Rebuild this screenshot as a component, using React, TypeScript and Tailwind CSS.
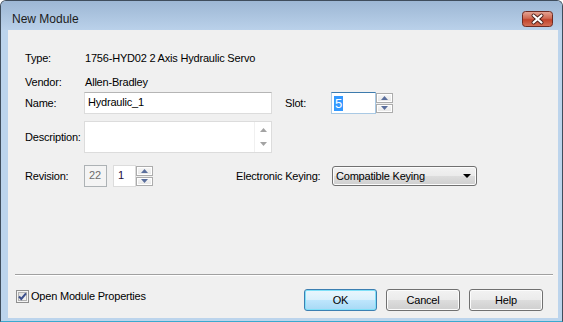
import React from "react";

function SpinArrow({ up }: { up?: boolean }) {
  return (
    <svg width="7" height="4" viewBox="0 0 7 4">
      <path d={up ? "M0 4 L3.5 0 L7 4 Z" : "M0 0 L7 0 L3.5 4 Z"} fill="#5a6e9c" />
    </svg>
  );
}

function Spinner() {
  return (
    <div className="flex flex-col w-[17px] h-full gap-px">
      <div className="flex-1 flex items-center justify-center border border-[#acacac] bg-linear-to-b from-[#f7f7f7] to-[#e6e6e6] shadow-[inset_0_0_0_1px_#ffffff]">
        <SpinArrow up />
      </div>
      <div className="flex-1 flex items-center justify-center border border-[#acacac] bg-linear-to-b from-[#f7f7f7] to-[#e6e6e6] shadow-[inset_0_0_0_1px_#ffffff]">
        <SpinArrow />
      </div>
    </div>
  );
}

function WinButton({ label, primary, className }: { label: string; primary?: boolean; className?: string }) {
  const look = primary
    ? "border-[#3c7fb1] bg-[linear-gradient(#eaf6fd_0%,#d9f0fc_49%,#bee6fd_50%,#a7d9f5_100%)] shadow-[inset_0_0_0_1px_#7fe0f8]"
    : "border-[#707070] bg-[linear-gradient(#f2f2f2_0%,#ebebeb_49%,#dddddd_50%,#cfcfcf_100%)] shadow-[inset_0_0_0_1px_#fcfcfc]";
  return (
    <button className={`h-[22px] rounded-[3px] border flex items-center justify-center text-[11px] text-black ${look} ${className ?? ""}`}>
      {label}
    </button>
  );
}

export default function App() {
  return (
    <div className="w-[563px] h-[322px] flex flex-col overflow-hidden rounded-t-[6px] border border-[#3f4d5c] border-b-[#3aa9cf] bg-[#bcd4ec] font-['Liberation_Sans',Arial,sans-serif] text-[11px] tracking-[-0.2px] text-black">
      {/* title bar */}
      <div className="h-[29px] flex items-start pt-[10px] pl-[11px] pr-[9px] bg-linear-to-b from-[#9db7d4] to-[#bad1ea]">
        <span className="text-[12px] leading-[16px] tracking-normal text-[#1b1b1b]">New Module</span>
        <svg className="ml-auto" width="31" height="16" viewBox="0 0 31 16">
          <defs>
            <linearGradient id="cls" x1="0" y1="0" x2="0" y2="1">
              <stop offset="0" stopColor="#e6a898" />
              <stop offset="0.45" stopColor="#d06a53" />
              <stop offset="0.55" stopColor="#c2432b" />
              <stop offset="1" stopColor="#d5735a" />
            </linearGradient>
          </defs>
          <rect x="0.5" y="0.5" width="30" height="15" rx="3" fill="url(#cls)" stroke="#6e2b22" />
          <path d="M11.5 4.5 L19.5 11.5 M19.5 4.5 L11.5 11.5" stroke="#4a1f19" strokeWidth="4" strokeLinecap="round" />
          <path d="M11.5 4.5 L19.5 11.5 M19.5 4.5 L11.5 11.5" stroke="#ffffff" strokeWidth="2.2" strokeLinecap="round" />
        </svg>
      </div>

      {/* client area */}
      <div className="flex-1 ml-[7px] mr-[4px] mb-[3px] bg-[#f0f0f0] flex flex-col">
        <div className="flex flex-col pl-[17px] pt-[21px]">
          <div className="flex h-[14px] items-center leading-[14px]">
            <span className="w-[60px]">Type:</span>
            <span>1756-HYD02 2 Axis Hydraulic Servo</span>
          </div>
          <div className="flex h-[14px] items-center leading-[14px] mt-[10px]">
            <span className="w-[60px]">Vendor:</span>
            <span>Allen-Bradley</span>
          </div>

          <div className="flex h-[22px] items-center mt-[3px]">
            <span className="w-[59px]">Name:</span>
            <div className="w-[188px] h-[22px] bg-white border border-[#dcdcdc] border-t-[#b5b5b5] flex items-start pt-[2px] pl-[3px] leading-[15px]">
              Hydraulic_1
            </div>
            <span className="ml-[13px] w-[46px]">Slot:</span>
            <div className="w-[62px] h-[22px] flex">
              <div className="flex-1 bg-white border border-[#a9c9e4] border-t-[#3d7bad] flex items-center pl-[2px]">
                <span className="bg-[#3399ff] text-white text-[13px] leading-[15px] px-px">5</span>
              </div>
              <div className="py-px">
                <Spinner />
              </div>
            </div>
          </div>

          <div className="flex h-[32px] items-center mt-[7px]">
            <span className="w-[59px]">Description:</span>
            <div className="w-[188px] h-[32px] bg-white border border-[#dcdcdc] flex justify-end">
              <div className="w-[17px] h-full border-l border-[#f0f0f0] flex flex-col items-center justify-between py-[6px]">
                <svg width="7" height="4" viewBox="0 0 7 4">
                  <path d="M0 4 L3.5 0 L7 4 Z" fill="#a3a3a3" />
                </svg>
                <svg width="7" height="4" viewBox="0 0 7 4">
                  <path d="M0 0 L7 0 L3.5 4 Z" fill="#a3a3a3" />
                </svg>
              </div>
            </div>
          </div>

          <div className="flex h-[22px] items-center mt-[12px]">
            <span className="w-[59px]">Revision:</span>
            <div className="w-[23px] h-[22px] border border-[#adb2b5] bg-[#f4f4f4] text-[#6d6d6d] pl-[4px] pt-[2px] leading-[15px]">
              22
            </div>
            <div className="ml-[6px] w-[40px] h-[22px] flex">
              <div className="flex-1 bg-white border border-[#dcdcdc] pl-[4px] pt-[2px] leading-[15px] text-[#1d0c3a]">1</div>
              <div className="py-px">
                <Spinner />
              </div>
            </div>
            <span className="ml-[83px] w-[96px]">Electronic Keying:</span>
            <div className="w-[145px] h-[20px] rounded-[3px] border border-[#707070] bg-[linear-gradient(#f2f2f2_0%,#ebebeb_49%,#dddddd_50%,#cfcfcf_100%)] shadow-[inset_0_0_0_1px_#fcfcfc] flex items-center pl-[3px] pr-[5px]">
              <span>Compatible Keying</span>
              <svg className="ml-auto" width="8" height="4" viewBox="0 0 8 4">
                <path d="M0 0 L8 0 L4 4 Z" fill="#000000" />
              </svg>
            </div>
          </div>
        </div>

        <div className="flex-1" />

        {/* separator */}
        <div className="ml-[7px] mr-[5px] h-[2px] border-t border-[#a0a0a0] border-b border-b-white" />

        <div className="flex items-start mt-[13px] mb-[7px] pl-[8px] pr-[15px]">
          <div className="flex items-center mt-px h-[13px]">
            <svg width="13" height="13" viewBox="0 0 13 13">
              <defs>
                <linearGradient id="chk" x1="0" y1="0" x2="1" y2="1">
                  <stop offset="0" stopColor="#dcdcdc" />
                  <stop offset="1" stopColor="#f6f6f6" />
                </linearGradient>
              </defs>
              <rect x="0.5" y="0.5" width="12" height="12" fill="#f4f4f4" stroke="#8f8f8f" />
              <rect x="2.5" y="2.5" width="8" height="8" fill="url(#chk)" stroke="#b3b3b3" />
              <path d="M3 6.5 L5.3 9 L10 3.3" fill="none" stroke="#3b4f8c" strokeWidth="2" />
            </svg>
            <span className="ml-[2px] leading-[13px]">Open Module Properties</span>
          </div>
          <WinButton label="OK" primary className="ml-auto w-[73px]" />
          <WinButton label="Cancel" className="ml-[9px] w-[74px]" />
          <WinButton label="Help" className="ml-[9px] w-[74px]" />
        </div>
      </div>
    </div>
  );
}
